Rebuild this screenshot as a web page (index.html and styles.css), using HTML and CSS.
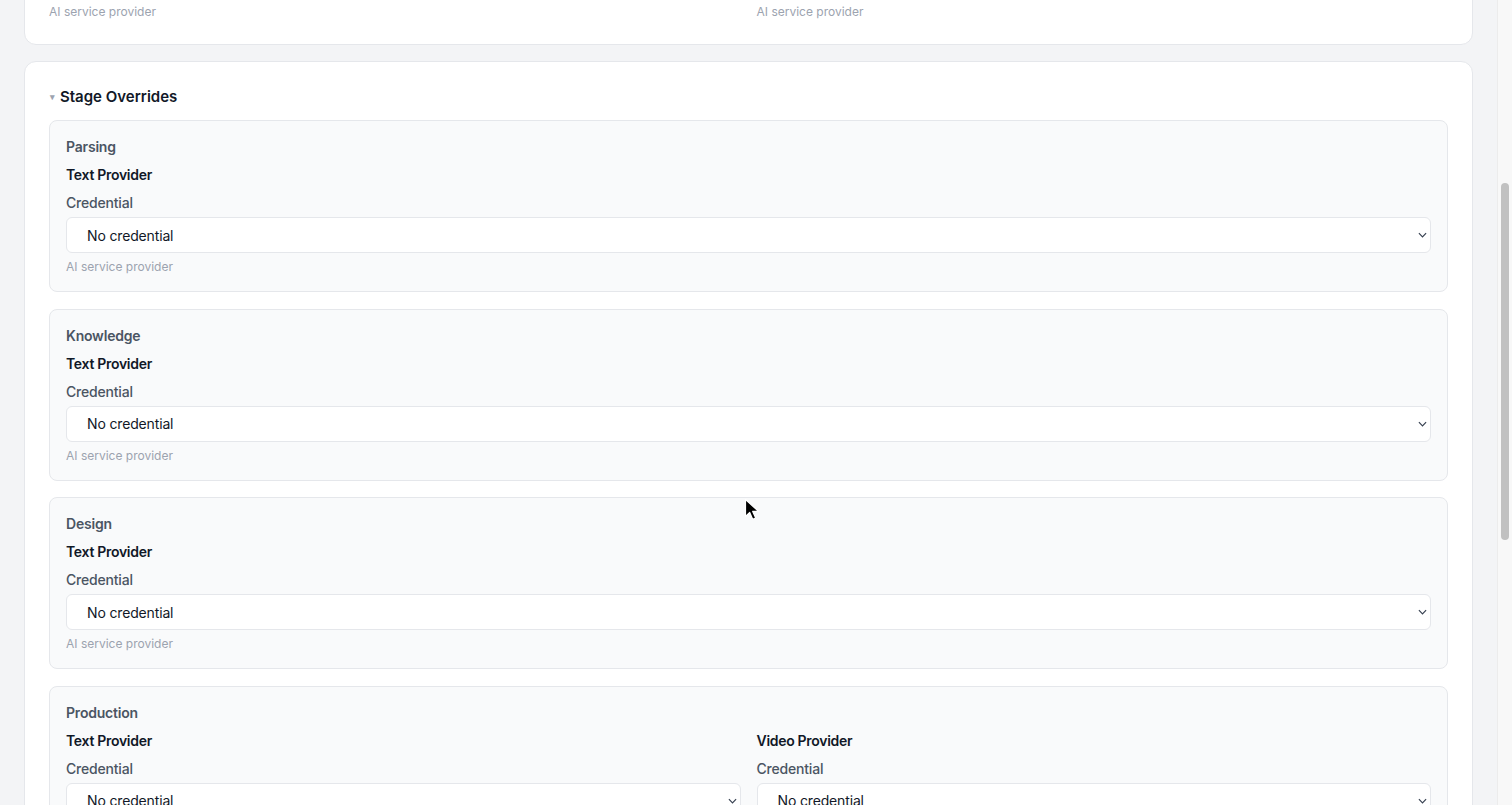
FILE: index.html
```html
<!DOCTYPE html>
<html lang="en">
<head>
    <meta charset="UTF-8">
    <meta name="viewport" content="width=device-width, initial-scale=1">
    <title>Pipeline Settings</title>
    <link rel="stylesheet" href="styles.css">
</head>
<body>
    <div class="page">
        <div class="page__header">
            <h1 class="page__title">Pipeline Settings</h1>
            <p class="page__subtitle">Choose which credentials each provider uses.</p>
        </div>

        <div class="card">
            <h2 class="card__title">Default Providers</h2>
            <div class="grid grid--two">
                <div class="field">
                    <div class="field__title">Text Provider</div>
                    <div class="field__label">Credential</div>
                    <div class="select-wrap">
                        <select class="select"><option>No credential</option></select>
                        <svg class="select-wrap__chevron" viewBox="0 0 10 6"><path d="M1 1l4 4 4-4"/></svg>
                    </div>
                    <div class="field__help">AI service provider</div>
                </div>
                <div class="field">
                    <div class="field__title">Video Provider</div>
                    <div class="field__label">Credential</div>
                    <div class="select-wrap">
                        <select class="select"><option>No credential</option></select>
                        <svg class="select-wrap__chevron" viewBox="0 0 10 6"><path d="M1 1l4 4 4-4"/></svg>
                    </div>
                    <div class="field__help">AI service provider</div>
                </div>
                <div class="field">
                    <div class="field__title">Image Provider</div>
                    <div class="field__label">Credential</div>
                    <div class="select-wrap">
                        <select class="select"><option>No credential</option></select>
                        <svg class="select-wrap__chevron" viewBox="0 0 10 6"><path d="M1 1l4 4 4-4"/></svg>
                    </div>
                    <div class="field__help">AI service provider</div>
                </div>
                <div class="field">
                    <div class="field__title">Audio Provider</div>
                    <div class="field__label">Credential</div>
                    <div class="select-wrap">
                        <select class="select"><option>No credential</option></select>
                        <svg class="select-wrap__chevron" viewBox="0 0 10 6"><path d="M1 1l4 4 4-4"/></svg>
                    </div>
                    <div class="field__help">AI service provider</div>
                </div>
            </div>
        </div>

        <details class="card" id="overrides" open>
            <summary class="card__summary">Stage Overrides</summary>
            <div class="stages">
                <div class="stage">
                    <div class="stage__name">Parsing</div>
                    <div class="grid">
                        <div class="field">
                            <div class="field__title">Text Provider</div>
                            <div class="field__label">Credential</div>
                            <div class="select-wrap">
                                <select class="select"><option>No credential</option></select>
                                <svg class="select-wrap__chevron" viewBox="0 0 10 6"><path d="M1 1l4 4 4-4"/></svg>
                            </div>
                            <div class="field__help">AI service provider</div>
                        </div>
                    </div>
                </div>

                <div class="stage">
                    <div class="stage__name">Knowledge</div>
                    <div class="grid">
                        <div class="field">
                            <div class="field__title">Text Provider</div>
                            <div class="field__label">Credential</div>
                            <div class="select-wrap">
                                <select class="select"><option>No credential</option></select>
                                <svg class="select-wrap__chevron" viewBox="0 0 10 6"><path d="M1 1l4 4 4-4"/></svg>
                            </div>
                            <div class="field__help">AI service provider</div>
                        </div>
                    </div>
                </div>

                <div class="stage">
                    <div class="stage__name">Design</div>
                    <div class="grid">
                        <div class="field">
                            <div class="field__title">Text Provider</div>
                            <div class="field__label">Credential</div>
                            <div class="select-wrap">
                                <select class="select"><option>No credential</option></select>
                                <svg class="select-wrap__chevron" viewBox="0 0 10 6"><path d="M1 1l4 4 4-4"/></svg>
                            </div>
                            <div class="field__help">AI service provider</div>
                        </div>
                    </div>
                </div>

                <div class="stage">
                    <div class="stage__name">Production</div>
                    <div class="grid grid--two">
                        <div class="field">
                            <div class="field__title">Text Provider</div>
                            <div class="field__label">Credential</div>
                            <div class="select-wrap">
                                <select class="select"><option>No credential</option></select>
                                <svg class="select-wrap__chevron" viewBox="0 0 10 6"><path d="M1 1l4 4 4-4"/></svg>
                            </div>
                            <div class="field__help">AI service provider</div>
                        </div>
                        <div class="field">
                            <div class="field__title">Video Provider</div>
                            <div class="field__label">Credential</div>
                            <div class="select-wrap">
                                <select class="select"><option>No credential</option></select>
                                <svg class="select-wrap__chevron" viewBox="0 0 10 6"><path d="M1 1l4 4 4-4"/></svg>
                            </div>
                            <div class="field__help">AI service provider</div>
                        </div>
                    </div>
                </div>

                <div class="stage">
                    <div class="stage__name">Publishing</div>
                    <div class="grid">
                        <div class="field">
                            <div class="field__title">Text Provider</div>
                            <div class="field__label">Credential</div>
                            <div class="select-wrap">
                                <select class="select"><option>No credential</option></select>
                                <svg class="select-wrap__chevron" viewBox="0 0 10 6"><path d="M1 1l4 4 4-4"/></svg>
                            </div>
                            <div class="field__help">AI service provider</div>
                        </div>
                    </div>
                </div>
            </div>
        </details>

        <div class="actions">
            <button class="actions__btn">Save settings</button>
        </div>
    </div>

    <div class="scrollbar">
        <div class="scrollbar__thumb"></div>
    </div>

    <svg class="cursor" width="16" height="24" viewBox="0 0 16 24">
        <path d="M1.5 1.5v17l4.2-4 3 6.8 3-1.3-3-6.6h5.8z" fill="#000" stroke="#fff" stroke-width="1.2" stroke-linejoin="round"/>
    </svg>

    <script src="scroll.js"></script>
</body>
</html>
```

FILE: styles.css
```css
html {
    background-color: #f3f4f6;
    scrollbar-width: none;
}

html::-webkit-scrollbar {
    display: none;
}

body {
    background-color: #f3f4f6;
    color: #111827;
    font-family: Inter, "Noto Sans", sans-serif;
    margin: 0;
    padding: 0;
}

.page {
    padding: 24px 39px 260px 24px;
    display: flex;
    flex-direction: column;
    gap: 16px;
}

.page__title {
    font-size: 24px;
    line-height: 32px;
    font-weight: 700;
    margin: 0;
}

.page__subtitle {
    font-size: 14px;
    line-height: 20px;
    color: #6b7280;
    margin: 4px 0 8px;
}

.card {
    background-color: #ffffff;
    border: 1px solid #e5e7eb;
    border-radius: 12px;
    padding: 24px;
}

.card__title {
    font-size: 15px;
    line-height: 20px;
    font-weight: 600;
    margin: 0 0 16px;
}

.card__summary {
    list-style: none;
    cursor: pointer;
    font-size: 15px;
    line-height: 19px;
    font-weight: 600;
    color: #111827;
    margin-bottom: 14px;
    display: flex;
    align-items: center;
}

.card__summary::-webkit-details-marker {
    display: none;
}

.card__summary::before {
    content: "\25BE";
    font-size: 9px;
    color: #9ca3af;
    margin: 1px 5px 0 1px;
}

.stages {
    display: flex;
    flex-direction: column;
    gap: 16.5px;
}

.stage {
    background-color: #f9fafb;
    border: 1px solid #e5e7eb;
    border-radius: 8px;
    padding: 16px;
}

.stage__name {
    font-size: 14px;
    line-height: 20px;
    font-weight: 600;
    letter-spacing: -0.2px;
    color: #4b5563;
    margin-bottom: 8px;
}

.grid {
    display: grid;
    grid-template-columns: 1fr;
    gap: 24px 16px;
}

.grid--two {
    grid-template-columns: 1fr 1fr;
}

.field__title {
    font-size: 14px;
    line-height: 20px;
    font-weight: 600;
    letter-spacing: -0.3px;
    color: #111827;
    margin-bottom: 8px;
}

.field__label {
    font-size: 14px;
    line-height: 20px;
    font-weight: 500;
    letter-spacing: -0.2px;
    color: #4b5563;
    margin-bottom: 4px;
}

.select-wrap {
    position: relative;
}

.select {
    appearance: none;
    -webkit-appearance: none;
    width: 100%;
    height: 36px;
    background-color: #ffffff;
    border: 1px solid #e5e7eb;
    border-radius: 6px;
    padding: 0 20px;
    font-family: inherit;
    font-size: 14px;
    letter-spacing: -0.15px;
    color: #111827;
    display: block;
}

.select-wrap__chevron {
    position: absolute;
    right: 4px;
    top: 15px;
    width: 9px;
    height: 6px;
    fill: none;
    stroke: #374151;
    stroke-width: 1.3;
    pointer-events: none;
}

.field__help {
    font-size: 12px;
    line-height: 16px;
    color: #9ca3af;
    margin-top: 6px;
}

.actions {
    display: flex;
    justify-content: flex-end;
}

.actions__btn {
    background-color: #111827;
    color: #ffffff;
    border: none;
    border-radius: 6px;
    padding: 10px 18px;
    font-family: inherit;
    font-size: 14px;
    font-weight: 600;
}

.scrollbar {
    position: fixed;
    top: 0;
    right: 0;
    bottom: 0;
    width: 14px;
    background-color: #f8f8f8;
    border-left: 1px solid #ececec;
}

.scrollbar__thumb {
    position: absolute;
    left: 3px;
    top: 183px;
    width: 8px;
    height: 357px;
    border-radius: 4px;
    background-color: #c1c1c1;
}

.cursor {
    position: fixed;
    left: 744px;
    top: 498px;
}
```

FILE: scroll.js
```js
function scrollToOverrides() {
    var el = document.getElementById("overrides");
    var top = el.getBoundingClientRect().top + window.scrollY;
    window.scrollTo(0, top - 61);
}

scrollToOverrides();
window.addEventListener("load", scrollToOverrides);
```
